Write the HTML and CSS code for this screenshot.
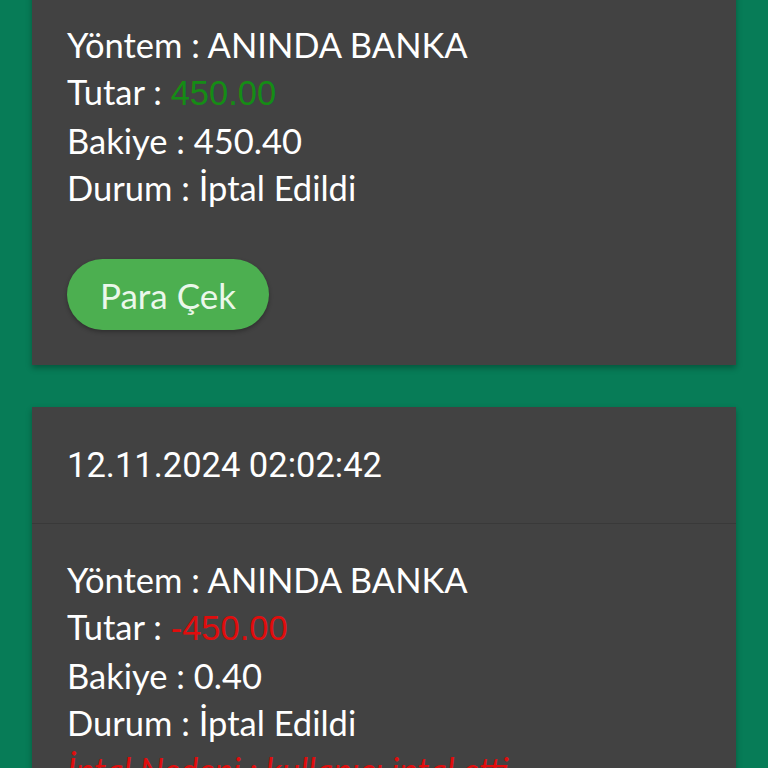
FILE: index.html
```html
<!DOCTYPE html>
<html lang="tr">
<head>
  <meta charset="UTF-8">
  <title>Para Çekme Geçmişi</title>
  <link rel="stylesheet" href="styles.css">
</head>
<body>

<div class="history">
  <div class="card card-first">
    <div class="card-body">
      <div class="row">Yöntem : ANINDA BANKA</div>
      <div class="row">Tutar : <span class="amount plus">450.00</span></div>
      <div class="row">Bakiye : 450.40</div>
      <div class="row">Durum : İptal Edildi</div>
      <button class="withdraw-btn">Para Çek</button>
    </div>
  </div>

  <div class="card">
    <div class="card-head">12.11.2024 02:02:42</div>
    <div class="card-body">
      <div class="row">Yöntem : ANINDA BANKA</div>
      <div class="row">Tutar : <span class="amount minus">-450.00</span></div>
      <div class="row">Bakiye : 0.40</div>
      <div class="row">Durum : İptal Edildi</div>
      <div class="row reason">İptal Nedeni : kullanıcı iptal etti</div>
    </div>
  </div>
</div>

</body>
</html>
```

FILE: styles.css
```css
html, body {
  margin: 0;
  background-color: #077c57;
}

body {
  font-family: Lato, "Open Sans", sans-serif;
  color: #ffffff;
  overflow: hidden;
  height: 768px;
}

.history {
  padding: 0 32px 40px;
}

.card {
  background-color: #424242;
  box-shadow: 0 3px 6px rgba(0, 0, 0, 0.3);
}

.card + .card {
  margin-top: 42px;
}

/* list is scrolled a bit, first card starts above the screen */
.card-first {
  margin-top: -11px;
}

.card-head {
  padding: 38px 35px;
  line-height: 40px;
  font-family: Roboto, sans-serif;
  font-size: 34.5px;
  border-bottom: 1px solid #393939;
}

.card-body {
  padding: 32px 35px 35px;
}

.row {
  font-size: 34.5px;
  line-height: 47px;
  white-space: nowrap;
}

.amount {
  font-family: "Liberation Sans", Arial, sans-serif;
}

.plus {
  color: #158c15;
}

.minus {
  color: #e00d0d;
}

.reason {
  color: #e00d0d;
  font-style: italic;
}

.withdraw-btn {
  margin-top: 48px;
  height: 71px;
  padding: 0 33px;
  border: none;
  border-radius: 36px;
  background-color: #4caf50;
  color: #eaf7ea;
  font-family: Lato, sans-serif;
  font-size: 35px;
  box-shadow: 0 2px 4px rgba(0, 0, 0, 0.3);
  cursor: pointer;
}
```
